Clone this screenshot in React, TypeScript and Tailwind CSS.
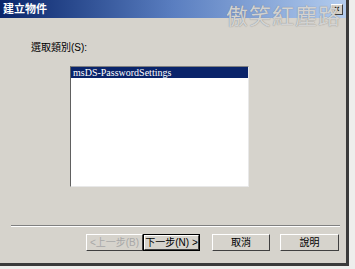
import React from 'react'

const cjk = { fontFamily: '"Liberation Sans", "Noto Sans CJK TC", sans-serif' }

function Btn({ label, disabled, primary, w }: { label: string; disabled?: boolean; primary?: boolean; w: string }) {
  return (
    <div
      className={`${w} h-[17px] flex items-center justify-center text-[10px] leading-none ${
        primary ? 'border border-black' : ''
      }`}
    >
      <div
        className={`w-full h-full flex items-center justify-center border border-t-white border-l-white border-r-[#404040] border-b-[#404040] ${
          disabled ? 'text-[#a8a8a8]' : 'text-black'
        }`}
      >
        {label}
      </div>
    </div>
  )
}

export default function App() {
  return (
    <div className="w-[355px] h-[269px] bg-[#eeeeec] overflow-hidden" style={cjk}>
      <div className="w-[349px] h-[266px] bg-[#d6d3cc] border-r-[3px] border-b-[3px] border-[#3a3a3a] flex flex-col relative">
        {/* Title bar */}
        <div className="h-[18px] flex items-center justify-between bg-gradient-to-r from-[#0a246a] via-[#5a7ec0] to-[#b4cdee] pl-[3px] pr-[3px]">
          <span className="text-white text-[11px] font-bold leading-none">建立物件</span>
          <div className="w-[12px] h-[11px] bg-[#d4d0c8] border border-t-white border-l-white border-r-[#404040] border-b-[#404040] flex items-center justify-center text-[9px] leading-none font-bold text-black">
            ×
          </div>
        </div>
        <span
          className="absolute right-[5px] top-[1px] z-10 text-[22px] leading-[26px] text-[#dedede]/90 tracking-[1px] pointer-events-none"
          style={{ fontFamily: '"Noto Sans CJK TC", sans-serif', textShadow: '0 0 1px #7a7a7a' }}
        >
          傲笑紅塵路
        </span>

        {/* Body */}
        <div className="flex-1 flex flex-col">
          <div className="pl-[31px] pt-[25px] text-[10px] leading-none text-black">選取類別(S):</div>
          <div className="ml-[70px] mt-[13px] w-[179px] h-[121px] bg-white border border-t-[#808080] border-l-[#606060] border-r-[#e8e8e8] border-b-[#e8e8e8]">
            <div className="h-[11px] bg-[#0a246a] text-white text-[10px] leading-[11px] pl-[2px]" style={{ fontFamily: '"Liberation Serif", serif' }}>
              msDS-PasswordSettings
            </div>
          </div>
          <div className="mt-[38px] ml-[11px] w-[329px] border-t border-t-[#808080] border-b border-b-white" />
          <div className="mt-[7px] flex items-center pl-[86px]">
            <Btn label="<上一步(B)" disabled w="w-[57px]" />
            <Btn label="下一步(N) >" primary w="w-[57px]" />
            <div className="w-[12px]" />
            <Btn label="取消" w="w-[58px]" />
            <div className="w-[10px]" />
            <Btn label="說明" w="w-[59px]" />
          </div>
        </div>
      </div>
    </div>
  )
}
